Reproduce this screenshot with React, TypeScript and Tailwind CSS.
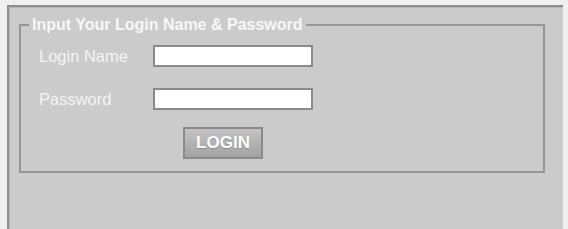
export default function App() {
  return (
    <div className="w-[568px] h-[229px] bg-[#efefef] pt-[5px] pl-[7px] overflow-hidden font-['Liberation_Sans',Arial,sans-serif]">
      <div className="h-[240px] w-[556px] border-l-2 border-t-2 border-[#8e8e8e] bg-[#cbcbcb] pl-[10px] pt-[9px] shadow-[inset_1px_1px_0_#b5b5b5]">
        <fieldset className="w-[526px] h-[157px] border-2 border-[#969696] px-0 pb-0">
          <legend className="ml-[8px] px-[3px] text-[16px] leading-[18px] font-bold text-[#f7f7f7]">
            Input Your Login Name &amp; Password
          </legend>
          <div className="pl-[18px] pt-[11px]">
            <div className="grid grid-cols-[114px_160px] gap-y-[21px] items-center">
              <label className="text-[16.5px] leading-[22px] text-[#f4f4f4]">Login Name</label>
              <input
                type="text"
                className="h-[22px] w-[160px] bg-white border-2 border-[#8a8a8a] outline-none"
              />
              <label className="text-[16.5px] leading-[22px] text-[#f4f4f4]">Password</label>
              <input
                type="password"
                className="h-[22px] w-[160px] bg-white border-2 border-[#8a8a8a] outline-none"
              />
            </div>
            <div className="pl-[144px] pt-[17px]">
              <button className="w-[80px] h-[32px] border-2 border-[#8a8a8a] bg-gradient-to-b from-[#c4c4c4] to-[#a2a2a2] text-[17px] leading-[20px] font-bold text-white [text-shadow:0_1px_1px_#8a8a8a]">
                LOGIN
              </button>
            </div>
          </div>
        </fieldset>
      </div>
    </div>
  );
}
